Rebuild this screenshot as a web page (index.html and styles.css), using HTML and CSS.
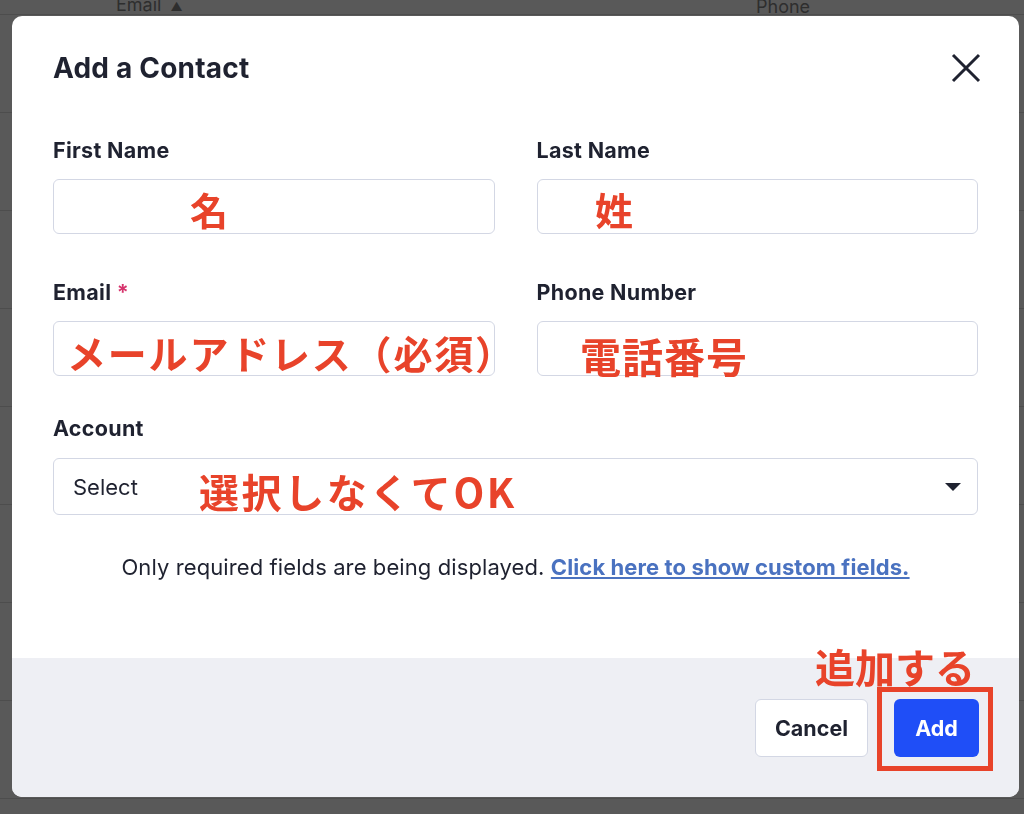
FILE: index.html
```html
<!DOCTYPE html>
<html>
<head>
  <meta charset="utf-8">
  <meta name="viewport" content="width=device-width">
  <title>Add a Contact</title>
  <link rel="stylesheet" href="styles.css">
</head>
<body>
<div class="backdrop">
  <div class="table-head">
    <span class="col-email">Email <span class="sort">▲</span></span>
    <span class="col-phone">Phone</span>
  </div>
  <div class="table-row"></div>
  <div class="table-row"></div>
  <div class="table-row"></div>
  <div class="table-row"></div>
  <div class="table-row"></div>
  <div class="table-row"></div>
  <div class="table-row"></div>
  <div class="table-row"></div>
</div>

<div class="modal">
  <div class="modal-body">
    <div class="modal-header">
      <h1>Add a Contact</h1>
      <button class="close" aria-label="Close">
        <svg width="30" height="30" viewBox="0 0 30 30"><path d="M2 2 L28 28 M28 2 L2 28" stroke="#1f2230" stroke-width="3" fill="none"/></svg>
      </button>
    </div>

    <div class="fields">
      <div class="field">
        <label>First Name</label>
        <div class="input"></div>
      </div>
      <div class="field">
        <label>Last Name</label>
        <div class="input"></div>
      </div>
      <div class="field row2">
        <label>Email <span class="req">*</span></label>
        <div class="input"></div>
      </div>
      <div class="field row2">
        <label>Phone Number</label>
        <div class="input"></div>
      </div>
      <div class="field wide">
        <label>Account</label>
        <div class="select">
          <span>Select</span>
          <svg width="18" height="10" viewBox="0 0 18 10"><path d="M1 1 L17 1 L9 9 Z" fill="#1f2230"/></svg>
        </div>
      </div>
    </div>

    <p class="note">Only required fields are being displayed. <a href="#">Click here to show custom fields.</a></p>
  </div>

  <div class="modal-footer">
    <button class="btn cancel">Cancel</button>
    <button class="btn add">Add</button>
  </div>

  <!-- red notes drawn over the screenshot -->
  <span class="mark m-first">名</span>
  <span class="mark m-last">姓</span>
  <span class="mark m-email">メールアドレス（必須）</span>
  <span class="mark m-phone">電話番号</span>
  <span class="mark m-account">選択しなくてOK</span>
  <span class="mark m-add">追加する</span>
  <div class="mark-box"></div>
</div>
</body>
</html>
```

FILE: styles.css
```css
body {
  margin: 0;
  background: #595959;
  font-family: "Inter", "Noto Sans", sans-serif;
  color: #1f2230;
  overflow: hidden;
}

.backdrop {
  height: 814px;
}
.table-head {
  height: 14px;
  display: flex;
  align-items: flex-end;
  font-size: 18px;
  line-height: 22px;
  color: #2e2e2e;
  border-bottom: 1px solid #4d4d4d;
  overflow: hidden;
}
.col-email {
  margin-left: 116px;
  width: 640px;
  position: relative;
  top: 4px;
}
.sort {
  font-size: 12px;
  margin-left: 4px;
}
.col-phone {
  position: relative;
  top: 4px;
}
.table-row {
  height: 97px;
  border-bottom: 1px solid #4d4d4d;
}
.table-row:first-of-type {
  height: 105px;
}

.modal {
  position: fixed;
  left: 12px;
  top: 16px;
  width: 1007px;
  height: 781px;
  background: #fff;
  border-radius: 10px;
  overflow: hidden;
  display: flex;
  flex-direction: column;
}
.modal-body {
  flex: 1;
  padding: 36px 41px 0;
}
.modal-header {
  display: flex;
  justify-content: space-between;
  align-items: center;
  height: 32px;
}
.modal-header h1 {
  margin: 0;
  font-size: 28px;
  font-weight: 700;
  letter-spacing: 0.2px;
}
.close {
  border: none;
  background: none;
  padding: 0;
  margin-right: -3px;
  display: flex;
}

.fields {
  display: grid;
  grid-template-columns: 1fr 1fr;
  column-gap: 42px;
  margin-top: 54px;
}
.field label {
  display: block;
  font-size: 21.5px;
  font-weight: 700;
  letter-spacing: 0.3px;
  line-height: 24px;
  height: 24px;
  margin-bottom: 17px;
}
.req {
  color: #d6336c;
}
.input {
  height: 53px;
  border: 1.5px solid #d3d7e4;
  border-radius: 6px;
}
.field.row2 {
  margin-top: 46px;
}
.field.wide {
  grid-column: 1 / 3;
  margin-top: 40px;
}
.field.wide label {
  margin-bottom: 18px;
}
.select {
  height: 55px;
  border: 1.5px solid #d3d7e4;
  border-radius: 6px;
  display: flex;
  align-items: center;
  justify-content: space-between;
  padding: 0 15px 0 19px;
  font-size: 22px;
}

.note {
  margin: 40px 0 0;
  text-align: center;
  font-size: 22px;
  letter-spacing: 0.1px;
  line-height: 24px;
  color: #1f2230;
}
.note a {
  color: #4a72c0;
  font-weight: 700;
  text-decoration: underline;
}

.modal-footer {
  height: 139px;
  background: #eeeff4;
  display: flex;
  justify-content: flex-end;
  align-items: flex-start;
  gap: 26px;
  padding: 41px 40px 0;
  box-sizing: border-box;
}
.btn {
  height: 58px;
  border-radius: 6px;
  font-family: inherit;
  font-size: 21.5px;
  font-weight: 700;
  cursor: pointer;
}
.cancel {
  width: 113px;
  background: #fff;
  border: 1.5px solid #d3d7e4;
  color: #1f2230;
}
.add {
  width: 85px;
  background: #1f4ef7;
  border: none;
  color: #fff;
}

.mark {
  position: absolute;
  color: #e8432a;
  font-family: "Noto Sans CJK JP", sans-serif;
  font-weight: 700;
  line-height: 1;
  white-space: nowrap;
}
.m-first { left: 178px; top: 174px; font-size: 38px; }
.m-last { left: 583px; top: 174px; font-size: 38px; }
.m-email { left: 55px; top: 317px; font-size: 39px; letter-spacing: 1.8px; }
.m-phone { left: 568px; top: 319px; font-size: 41px; letter-spacing: 1px; }
.m-account { left: 187px; top: 455px; font-size: 40px; letter-spacing: 2.6px; }
.m-add { left: 803px; top: 630px; font-size: 40px; }
.mark-box {
  position: absolute;
  left: 865px;
  top: 671px;
  width: 106px;
  height: 74px;
  border: 5px solid #e8432a;
}
```
